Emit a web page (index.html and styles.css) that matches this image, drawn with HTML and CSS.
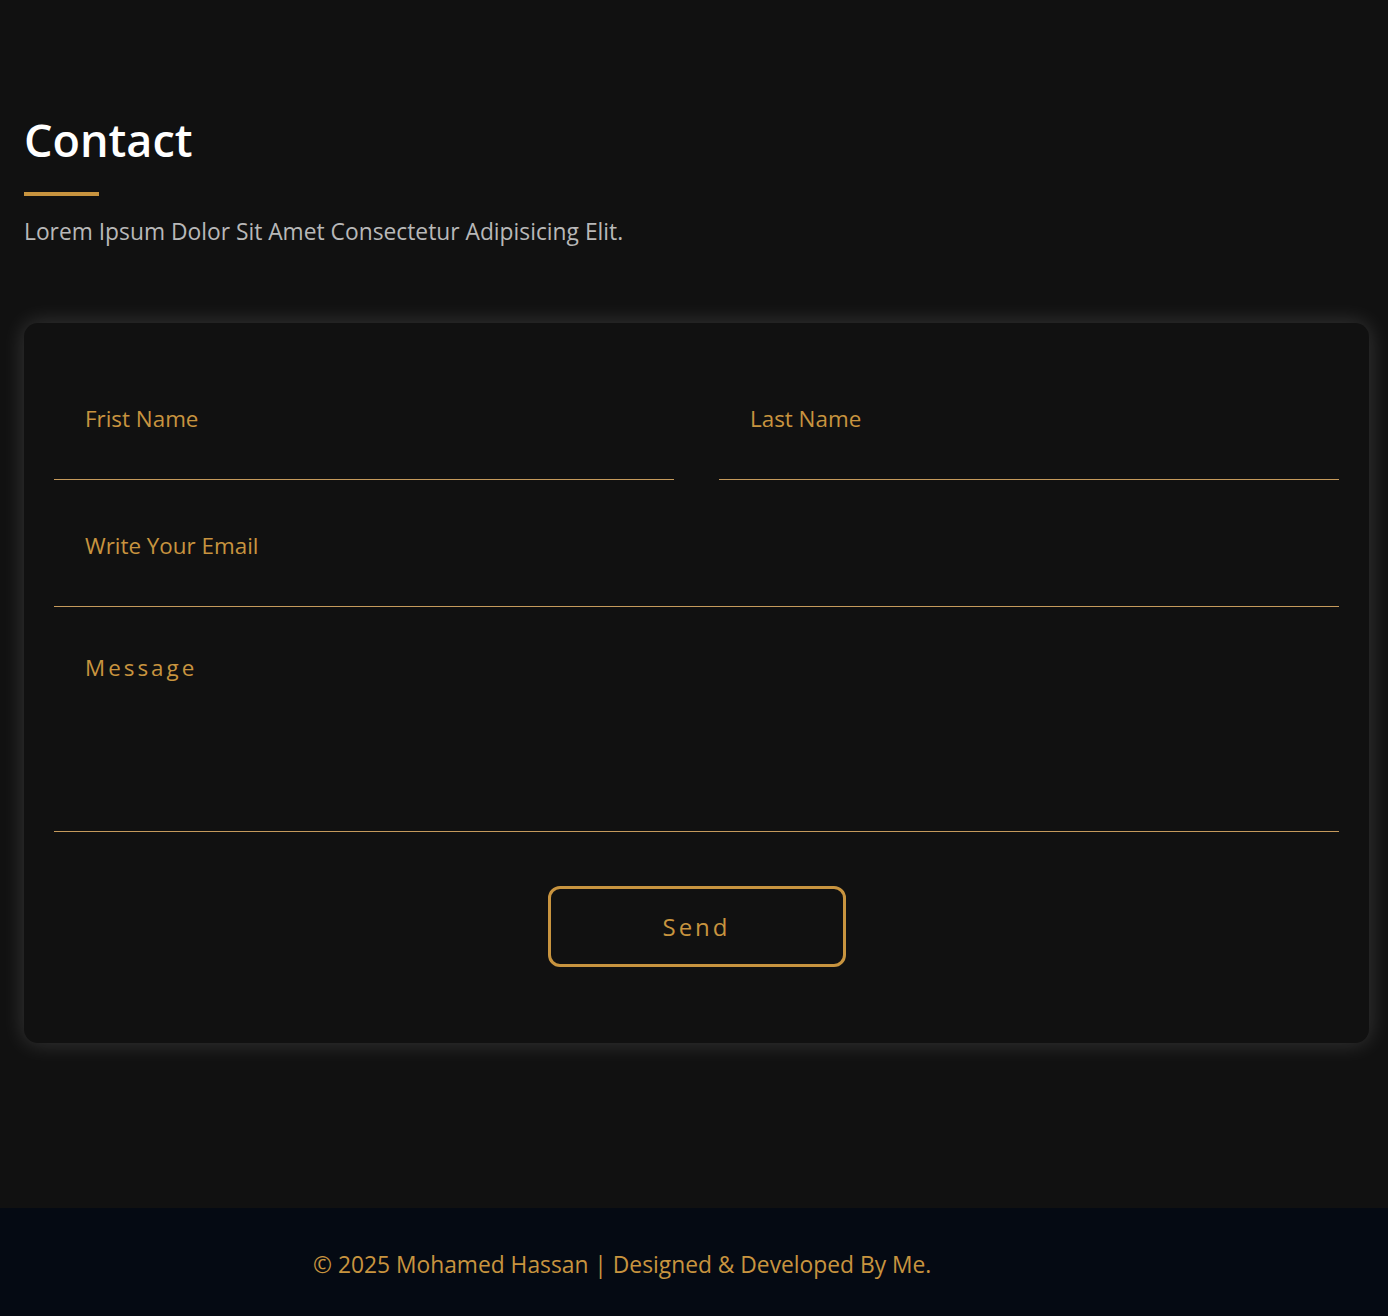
FILE: index.html
```html
<!DOCTYPE html>
<html lang="en">
<head>
<meta charset="utf-8">
<title>Contact</title>
<link rel="stylesheet" href="styles.css">
</head>
<body>
<section class="contact">
  <h2 class="title">Contact</h2>
  <div class="bar"></div>
  <p class="lead">Lorem Ipsum Dolor Sit Amet Consectetur Adipisicing Elit.</p>
  <form class="card">
    <div class="row">
      <input class="field" type="text" placeholder="Frist Name">
      <input class="field" type="text" placeholder="Last Name">
    </div>
    <input class="field" type="email" placeholder="Write Your Email">
    <textarea class="message" placeholder="Message"></textarea>
    <button class="send" type="button">Send</button>
  </form>
</section>
<footer class="footer">
  <p class="copy">© 2025 Mohamed Hassan | Designed &amp; Developed By Me.</p>
</footer>
</body>
</html>
```

FILE: styles.css
```css
* { box-sizing: border-box; }
html, body { margin: 0; padding: 0; }
body {
  background: #111111;
  font-family: "Open Sans", "Noto Sans", sans-serif;
  color: #fff;
}
.contact {
  padding: 108px 19px 165px 24px;
}
.title {
  margin: 0;
  font-size: 45px;
  font-weight: 600;
  line-height: 64px;
  color: #ffffff;
}
.bar {
  width: 75px;
  height: 4px;
  background: #c8943f;
  margin-top: 20px;
}
.lead {
  margin: 21px 0 0;
  font-size: 22.8px;
  line-height: 30px;
  color: #b8b8b8;
}
.card {
  margin-top: 76px;
  background: #111111;
  border-radius: 14px;
  box-shadow: 0 0 22px rgba(255, 255, 255, 0.17);
  padding: 30px 30px 76px;
  display: flex;
  flex-direction: column;
}
.row {
  display: flex;
  gap: 45px;
}
.field, .message {
  display: block;
  font-family: inherit;
  font-size: 22.4px;
  color: #c8943f;
  background: transparent;
  border: none;
  border-bottom: 1px solid #c59a5c;
  border-radius: 0;
  outline: none;
  width: 100%;
  margin: 0;
}
.field {
  height: 127px;
  padding: 4px 31px 0;
}
.field::placeholder { color: #c8943f; opacity: 1; }
.message {
  height: 225px;
  padding: 45px 31px 0;
  resize: none;
  letter-spacing: 3px;
}
.message::placeholder { color: #c8943f; opacity: 1; }
.send {
  align-self: center;
  margin-top: 54px;
  width: 298px;
  height: 81px;
  background: transparent;
  border: 3px solid #c8943f;
  border-radius: 12px;
  color: #c8943f;
  font-family: inherit;
  font-size: 24px;
  letter-spacing: 3px;
  cursor: pointer;
}
.footer {
  background: #050a13;
  height: 108px;
  display: flex;
  align-items: center;
  padding: 4px 0 0 313px;
}
.copy {
  margin: 0;
  font-size: 22.8px;
  color: #c8943f;
}
```
